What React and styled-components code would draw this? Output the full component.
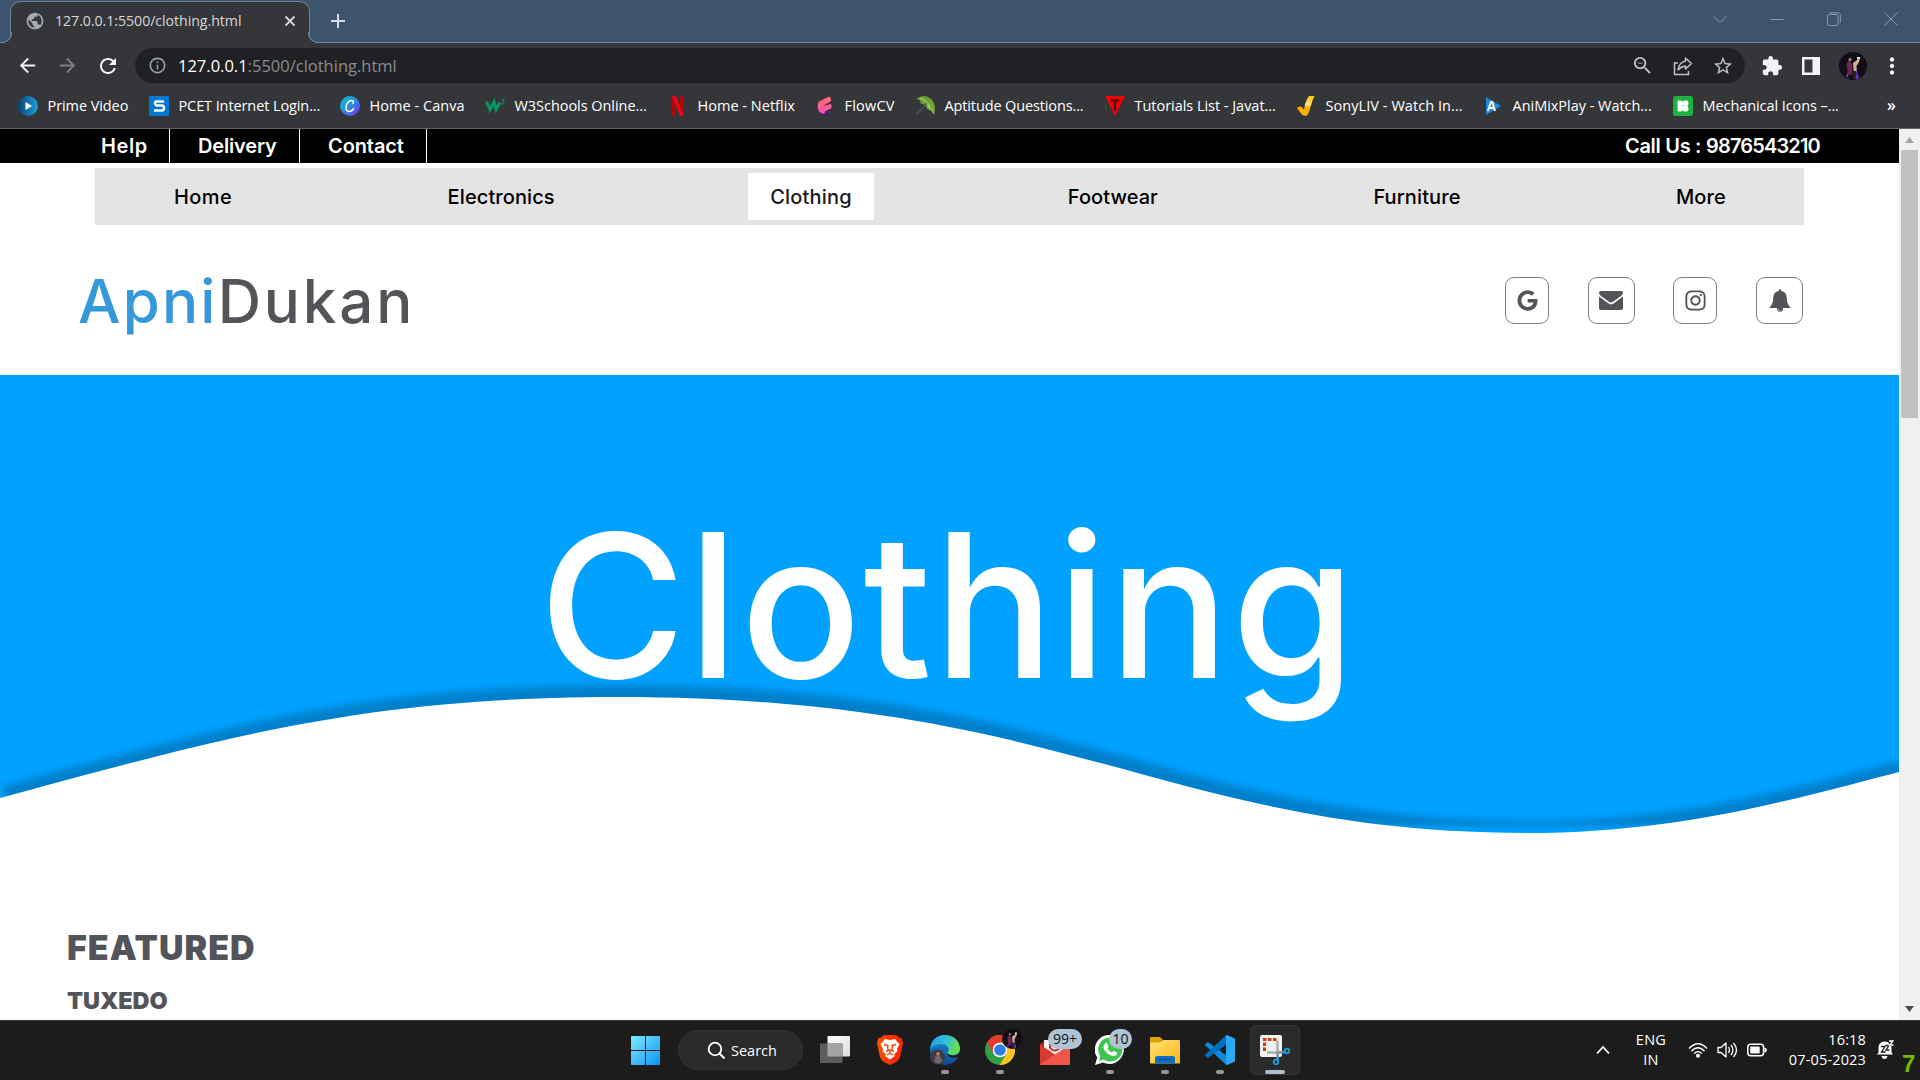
import React from 'react';
import styled, { createGlobalStyle } from 'styled-components';
import { FaGoogle, FaInstagram } from 'react-icons/fa';
import {
  MdArrowBack, MdArrowForward, MdRefresh, MdInfoOutline, MdZoomOut,
  MdStarBorder, MdExtension, MdMoreVert, MdPublic,
} from 'react-icons/md';

const GlobalStyle = createGlobalStyle`
  * { box-sizing: border-box; }
  body { margin: 0; background: #fff; overflow: hidden; }
  svg { display: block; flex: none; }
`;

const Screen = styled.div`
  width: 1920px;
  height: 1080px;
  display: flex;
  flex-direction: column;
  overflow: hidden;
  font-family: "Open Sans", "Noto Sans", sans-serif;
`;

/* ---------- browser window ---------- */

const TabStrip = styled.div`
  height: 43px;
  display: flex;
  align-items: stretch;
  background: #3c546c;
  border-bottom: 1px solid #6f869b;
`;

const Tab = styled.div`
  position: relative;
  width: 300px;
  height: 42px;
  margin: 1px 0 -1px 10px;
  padding: 0 13px 4px 14px;
  display: flex;
  align-items: center;
  gap: 10px;
  background: #35363a;
  border: 1px solid #6f869b;
  border-bottom: 0;
  border-radius: 10px 10px 0 0;
  color: #d5d7da;
  font-size: 14.2px;
  &::before, &::after {
    content: "";
    position: absolute;
    bottom: 0;
    width: 10px;
    height: 10px;
    border-bottom: 1px solid #6f869b;
    background: transparent;
  }
  &::before { left: -10px; border-right: 1px solid #6f869b; border-bottom-right-radius: 10px; box-shadow: 4px 4px 0 1px #35363a; clip-path: inset(0 -1px 0 0); }
  &::after { right: -10px; border-left: 1px solid #6f869b; border-bottom-left-radius: 10px; box-shadow: -4px 4px 0 1px #35363a; clip-path: inset(0 0 0 -1px); }
`;

const TabTitle = styled.span`
  flex: 1;
  letter-spacing: -0.06px;
  white-space: nowrap;
`;

const NewTab = styled.div`
  display: flex;
  align-items: center;
  padding: 0 0 0 20px;
`;

const WindowControls = styled.div`
  margin-left: auto;
  padding: 0 22px 5px 0;
  display: flex;
  align-items: center;
  gap: 43px;
`;

const Toolbar = styled.div`
  height: 45px;
  display: flex;
  align-items: center;
  padding: 0 15px 0 16px;
  background: #35363a;
  color: #f1f3f4;
`;

const NavButtons = styled.div`
  display: flex;
  gap: 17px;
  width: 119px;
`;

const Dim = styled.span`
  color: #8a8c90;
`;

const AddressBar = styled.div`
  width: 1610px;
  height: 35px;
  padding: 0 11px 0 13px;
  display: flex;
  align-items: center;
  border-radius: 18px;
  background: #202124;
  color: #bdc1c6;
`;

const Address = styled.span`
  flex: 1;
  padding-left: 11px;
  font-size: 16.5px;
  color: #fff;
  white-space: nowrap;
`;

const AddressActions = styled.div`
  display: flex;
  align-items: center;
  gap: 19px;
`;

const Extensions = styled.div`
  margin-left: auto;
  display: flex;
  align-items: center;
  gap: 18px;
`;

const MoreButton = styled.span`
  margin-left: -6px;
`;

const Bookmarks = styled.div`
  height: 41px;
  padding: 0 19px 5px 18px;
  display: flex;
  align-items: center;
  gap: 21px;
  background: #35363a;
  border-bottom: 1px solid #606165;
  color: #fff;
  font-size: 14.5px;
`;

const Bookmark = styled.div`
  display: flex;
  align-items: center;
  gap: 10px;
`;

const BookmarkLabel = styled.span`
  width: ${p => p.$w}px;
  margin-left: -0.5px;
  margin-right: 0.5px;
  letter-spacing: ${p => p.$ls || 0}px;
  white-space: nowrap;
`;

const Overflow = styled.span`
  margin-left: auto;
  padding: 0 5px 2px 0;
  font-size: 16px;
  font-weight: 600;
`;

/* ---------- shop page ---------- */

const Viewport = styled.div`
  height: 891px;
  display: flex;
  background: #fff;
`;

const Page = styled.main`
  width: 1899px;
  overflow: hidden;
  font-family: Inter, "Noto Sans", sans-serif;
  color: #53545a;
`;

const TopBar = styled.div`
  height: 34px;
  display: flex;
  padding: 0 79px 0 71px;
  background: #000;
  color: #fff;
  font-size: 20px;
  font-weight: 600;
  line-height: 34px;
`;

const TopLink = styled.span`
  width: ${p => p.$w}px;
  padding-left: ${p => p.$pad}px;
  border-right: 1px solid #fff;
  letter-spacing: ${p => p.$ls}px;
  white-space: nowrap;
`;

const Phone = styled.span`
  margin-left: auto;
  display: flex;
  width: 195px;
  white-space: nowrap;
`;

const PhoneLabel = styled.span`
  width: 81px;
  letter-spacing: -0.3px;
`;

const PhoneNumber = styled.span`
  letter-spacing: -0.84px;
`;

const Menu = styled.nav`
  height: 57px;
  margin: 5px 95px 0;
  padding: 0 57px;
  display: flex;
  align-items: center;
  justify-content: space-between;
  background: #e4e4e4;
`;

const MenuItem = styled.span`
  width: ${p => p.$w}px;
  height: 47px;
  padding-left: ${p => p.$pad || 21}px;
  background: ${p => (p.$active ? '#fff' : 'transparent')};
  color: ${p => (p.$active ? '#1a1a1a' : '#000')};
  font-size: 20px;
  font-weight: 500;
  line-height: 49px;
  letter-spacing: ${p => p.$ls}px;
  white-space: nowrap;
`;

const Header = styled.header`
  height: 150px;
  padding: 0 96px 0 78px;
  display: flex;
  align-items: center;
  justify-content: space-between;
`;

const Brand = styled.div`
  padding-top: 1px;
  font-size: 60px;
  font-weight: 500;
  letter-spacing: 2.9px;
  white-space: nowrap;
`;

const BrandAccent = styled.span`
  letter-spacing: 2.2px;
  color: #3498db;
`;

const Social = styled.div`
  display: flex;
  gap: 38.6px;
`;

const SocialButton = styled.span`
  width: ${p => p.$w}px;
  height: 47px;
  display: flex;
  align-items: center;
  justify-content: center;
  border: 1px solid #7f8084;
  border-radius: 9px;
`;

const Hero = styled.section`
  position: relative;
  height: 463px;
  padding: 130px 0 0 539px;
  background: #00a1ff;
  overflow: hidden;
`;

const HeroTitle = styled.h1`
  position: relative;
  margin: 0;
  color: #fff;
  font-size: 200px;
  font-weight: 500;
  line-height: 200px;
  letter-spacing: 2.2px;
`;

const Wave = styled.svg`
  position: absolute;
  left: 0;
  top: 0;
  filter: drop-shadow(4px -12px 3px rgba(0, 0, 0, 0.2));
`;

const Featured = styled.section`
  padding: 89px 0 0 67px;
`;

const FeaturedTitle = styled.h2`
  margin: 0;
  font-size: 34px;
  font-weight: 900;
  line-height: 42px;
  letter-spacing: 1px;
`;

const FeaturedItem = styled.h3`
  margin: 18px 0 0 0;
  font-size: 23.5px;
  font-weight: 900;
  line-height: 28px;
  letter-spacing: -0.1px;
`;

const Scrollbar = styled.div`
  width: 21px;
  padding: 8px 0;
  display: flex;
  flex-direction: column;
  align-items: center;
  background: #f0f0f0;
`;

const ScrollThumb = styled.div`
  width: 17px;
  height: 268px;
  margin: 7px 0 auto;
  background: #c1c1c1;
`;

/* ---------- taskbar ---------- */

const Taskbar = styled.footer`
  height: 60px;
  display: flex;
  align-items: stretch;
  padding-bottom: 1px;
  border-top: 1px solid #3b3d3f;
  background: #1c1c1c;
  color: #fff;
  font-size: 14.5px;
`;

const Apps = styled.div`
  padding-left: 620px;
  display: flex;
  align-items: center;
`;

const SearchPill = styled.div`
  width: 125px;
  height: 40px;
  margin: 0 4.5px 0 8px;
  padding-left: 28px;
  display: flex;
  align-items: center;
  gap: 5px;
  border: 1px solid #323232;
  border-radius: 20px;
  background: #2a2a2a;
`;

const TaskButton = styled.div`
  position: relative;
  width: ${p => (p.$active ? 50 : 55)}px;
  height: 50px;
  margin-left: ${p => (p.$active ? 2.5 : 0)}px;
  display: flex;
  align-items: center;
  justify-content: center;
  border-radius: 5px;
  background: ${p => (p.$active ? '#2a2a2a' : 'transparent')};
  border: 1px solid ${p => (p.$active ? '#353535' : 'transparent')};
  &::after {
    content: "";
    display: ${p => (p.$run ? 'block' : 'none')};
    position: absolute;
    bottom: 0;
    width: ${p => (p.$active ? 20 : 8)}px;
    height: 4px;
    border-radius: 2px;
    background: ${p => (p.$active ? '#aac1d4' : '#979797')};
  }
`;

const StartButton = styled(TaskButton)`
  width: 50px;
`;

const Badge = styled.span`
  position: absolute;
  top: 3px;
  left: ${p => p.$left}px;
  width: ${p => p.$w}px;
  height: 20px;
  border-radius: 10px;
  background: #aec4d5;
  color: #111;
  font-size: 14px;
  line-height: 20px;
  text-align: center;
`;

const BadgeAvatar = styled.span`
  position: absolute;
  top: 3px;
  left: 28px;
`;

const Tray = styled.div`
  margin-left: auto;
  display: flex;
  align-items: center;
`;

const Language = styled.div`
  width: 74px;
  margin-left: 4px;
  line-height: 20px;
  letter-spacing: 0.3px;
  text-align: center;
`;

const Clock = styled.div`
  width: 78px;
  margin-right: 10px;
  line-height: 20px;
  letter-spacing: 0.15px;
  text-align: right;
  white-space: nowrap;
`;

const TrayIcons = styled.div`
  display: flex;
  align-items: center;
  gap: 9px;
  margin-right: 21px;
`;

const TrayBell = styled.div`
  margin-right: 8px;
`;

const Fps = styled.span`
  width: 18px;
  padding-top: 28px;
  color: #76b900;
  font-family: "Liberation Sans", sans-serif;
  font-size: 24px;
  font-weight: 700;
  line-height: 24px;
`;

/* ---------- drawings ---------- */

const Avatar = ({ size }) => (
  <svg width={size} height={size} viewBox="0 0 28 28">
    <circle cx="14" cy="14" r="14" fill="#130d16" />
    <path d="M7.500 12l2.500-4 3 4 .5 5-1 6H9z" fill="#6b2a4d" />
    <path d="M14 11l4-3 1-3 2 1-1 4-2.500 4 .3 6h-3z" fill="#d3ae92" />
    <path d="M17.500 18l2.500 8-3 1.500zM8.500 20L7 24.500l2.500 2z" fill="#6a3ad0" />
    <path d="M13 19h4v8h-3z" fill="#2b2030" />
    <circle cx="11" cy="7.500" r="1.500" fill="#b98a76" />
    <path d="M18 5h3v1.800h-3z" fill="#f4ece4" />
  </svg>
);

const icons = {
  prime: (
    <>
      <defs><linearGradient id="pv" x1="1" x2="0"><stop offset="0" stopColor="#1d9fdc" /><stop offset="1" stopColor="#0b4270" /></linearGradient></defs>
      <circle cx="10" cy="10" r="10" fill="url(#pv)" /><path d="M7.500 6l6.500 4-6.500 4z" fill="#fff" />
    </>
  ),
  pcet: (
    <>
      <rect width="20" height="20" fill="#0078d0" />
      <path d="M15 5.500H7.500Q6 5.500 6 7T7.500 9.500H13q2 0 2 2.500t-2 2.500H5" fill="none" stroke="#fff" strokeWidth="2.400" />
    </>
  ),
  canva: (
    <>
      <defs><linearGradient id="cv" x1="0" y1="0" x2="1" y2="1"><stop offset="0" stopColor="#00c4cc" /><stop offset=".5" stopColor="#2f8be0" /><stop offset="1" stopColor="#7d2ae8" /></linearGradient></defs>
      <circle cx="10" cy="10" r="10" fill="url(#cv)" />
      <path d="M13 7.500c.8-1.200.5-3-1.300-3C8.500 4.500 6 8 6 11.500 6 14 7.300 15.500 9.200 15.500c1.800 0 3.300-1 4.300-2.800" fill="none" stroke="#fff" strokeWidth="1.500" strokeLinecap="round" />
    </>
  ),
  w3: (
    <>
      <path d="M1.500 5.500l3.500 8 4-7.500 2 7.500 4-7" fill="none" stroke="#059862" strokeWidth="3" />
      <path d="M16.500 3.500h2.500l-1.300 2q1.500.3 1.300 1.700-.3 1.300-2.500 1" fill="none" stroke="#059862" strokeWidth="1" />
    </>
  ),
  netflix: (
    <>
      <path d="M4 0h4v20l-4 .3zM12 0h4v20.300l-4-.3z" fill="#b1060f" />
      <path d="M4 0h4l8 20.200-4-.2z" fill="#e50914" />
    </>
  ),
  flow: (
    <>
      <defs><linearGradient id="fl" x1="0" y1="0" x2="0" y2="1"><stop offset="0" stopColor="#ff6b6b" /><stop offset="1" stopColor="#ff4fb4" /></linearGradient></defs>
      <path d="M7 14.500h7L10.500 20 7 18z" fill="#4a1a8c" />
      <path d="M3.500 6L14 .5q2.500 1.500 2 4.500l-6.500 4.500L16 8q1.500 2 0 4.500l-5.500 2.500-1.500 3-5-2L2.500 10z" fill="url(#fl)" />
      <path d="M9.500 9.500l3-2" stroke="#35363a" strokeWidth=".9" />
    </>
  ),
  umbrella: (
    <>
      <path d="M1 3Q10-3 16 3t3 15l-4-4-3-1-2-4-4-1.500L4.500 4z" fill="#6f9f35" />
      <path d="M5 2q8 1 14 16M5 2l7 4 3 8" stroke="#a5cf63" strokeWidth="1" fill="none" />
      <path d="M12 7L3.500 16.500Q2 19 .8 17" stroke="#55575a" strokeWidth="1.200" fill="none" />
    </>
  ),
  tutorial: (
    <>
      <path d="M0 0h20L10 20z" fill="#f90000" />
      <path d="M5.500 3.200h9v2.200h-3.200V15H8.700V5.400H5.500z" fill="#5c0909" />
      <path d="M.3 9v5" stroke="#5a5b5e" />
    </>
  ),
  sony: (
    <>
      <defs><linearGradient id="sl" x1="0" y1="0" x2="0" y2="1"><stop offset="0" stopColor="#ffc400" /><stop offset=".45" stopColor="#ffe680" /><stop offset=".55" stopColor="#f9ae00" /><stop offset="1" stopColor="#ffb300" /></linearGradient></defs>
      <path d="M1 12q2-2.500 5-1l2 3q1-9 5-14h5.500q-2.500 5-4 11-1 5-3.500 8.500-3 1-5-1Q3 15 1 12z" fill="url(#sl)" />
    </>
  ),
  ani: (
    <>
      <path d="M3 1l15 9L3 19z" fill="#1e88e5" />
      <path d="M4.800 15L8 6h1.300L12 15M6 12h5" fill="none" stroke="#fff" strokeWidth="1.900" />
    </>
  ),
  mech: (
    <>
      <rect width="20" height="20" rx="2.500" fill="#1fb141" />
      <path d="M4.500 5.500q0-1 1-1h2.500q1 0 1 1v1q.5-2 2.500-2h2q2 0 2 2.200 0 2.300-1.200 3.300 1.200 1 1.200 3.300 0 2.200-2 2.200h-2q-2 0-2.500-2v1q0 1-1 1H5.500q-1 0-1-1z" fill="#fff" />
      <path d="M9.500 9.800h1.600" stroke="#1fb141" strokeWidth=".8" />
    </>
  ),
};

const bookmarks = [
  ['prime', 'Prime Video', 80, -0.08],
  ['pcet', 'PCET Internet Login...', 140, -0.1],
  ['canva', 'Home - Canva', 94, 0.05],
  ['w3', 'W3Schools Online...', 132, -0.05],
  ['netflix', 'Home - Netflix', 96, 0.02],
  ['flow', 'FlowCV', 49, 0.2],
  ['umbrella', 'Aptitude Questions...', 139, -0.13],
  ['tutorial', 'Tutorials List - Javat...', 140, -0.03],
  ['sony', 'SonyLIV - Watch In...', 136, 0.06],
  ['ani', 'AniMixPlay - Watch...', 139, -0.03],
  ['mech', 'Mechanical Icons –...', 136, -0.08],
];

const menu = [
  ['Home', 101, 0.42, 22],
  ['Electronics', 150, 0.1, 22],
  ['Clothing', 126, 0.2, 22],
  ['Footwear', 133, 0.06, 21],
  ['Furniture', 130, 0.12, 21],
  ['More', 92, 0.1, 21],
];

const Browser = () => (
  <>
    <TabStrip>
      <Tab>
        <MdPublic size={20} color="#a6abb0" />
        <TabTitle>127.0.0.1:5500/clothing.html</TabTitle>
        <svg width="12" height="12" viewBox="0 0 12 12"><path d="M1.500 1.500l9 9M10.500 1.500l-9 9" stroke="#d5d7da" strokeWidth="1.800" /></svg>
      </Tab>
      <NewTab>
        <svg width="16" height="16" viewBox="0 0 16 16"><path d="M8 1v14M1 8h14" stroke="#d6dde4" strokeWidth="2" /></svg>
      </NewTab>
      <WindowControls>
        <svg width="14" height="14" viewBox="0 0 14 14"><path d="M.5 4L7 10.500 13.500 4" fill="none" stroke="#8a9aaa" /></svg>
        <svg width="14" height="14" viewBox="0 0 14 14"><path d="M.5 7.500h13" stroke="#8a9aaa" /></svg>
        <svg width="14" height="14" viewBox="0 0 14 14" fill="none" stroke="#8a9aaa"><rect x=".5" y="2.500" width="10.500" height="11" rx="2" /><path d="M2.500.8H11q2.300 0 2.300 2.300V11" /></svg>
        <svg width="14" height="14" viewBox="0 0 14 14"><path d="M.5.500l13 13M13.500.500l-13 13" stroke="#8a9aaa" /></svg>
      </WindowControls>
    </TabStrip>
    <Toolbar>
      <NavButtons>
        <MdArrowBack size={23} />
        <MdArrowForward size={23} color="#7d7e82" />
        <MdRefresh size={24} />
      </NavButtons>
      <AddressBar>
        <MdInfoOutline size={19} color="#9aa0a6" />
        <Address>127.0.0.1<Dim>:5500/clothing.html</Dim></Address>
        <AddressActions>
          <MdZoomOut size={23} />
          <svg width="20" height="20" viewBox="0 0 20 20" fill="none" stroke="#bdc1c6" strokeWidth="1.500">
            <path d="M5 7H1.500v11.500h14V15" /><path d="M12.500 2L18.500 7.500l-6 5.500V10Q8 10.500 5 14q.8-7.500 7.500-9z" strokeLinejoin="round" />
          </svg>
          <MdStarBorder size={22} />
        </AddressActions>
      </AddressBar>
      <Extensions>
        <MdExtension size={22} />
        <svg width="20" height="20" viewBox="0 0 20 20"><path d="M1 1h18v18H1zM3.500 3.500v13h8v-13z" fill="#f1f3f4" fillRule="evenodd" /></svg>
        <Avatar size={28} />
        <MoreButton><MdMoreVert size={26} /></MoreButton>
      </Extensions>
    </Toolbar>
    <Bookmarks>
      {bookmarks.map(([icon, label, w, ls]) => (
        <Bookmark key={icon}>
          <svg width="20" height="20" viewBox="0 0 20 20">{icons[icon]}</svg>
          <BookmarkLabel $w={w} $ls={ls}>{label}</BookmarkLabel>
        </Bookmark>
      ))}
      <Overflow>»</Overflow>
    </Bookmarks>
  </>
);

const Shop = () => (
  <Page>
    <TopBar>
      <TopLink $w={99} $ls={0.6} $pad={30}>Help</TopLink>
      <TopLink $w={130} $ls={-0.17} $pad={28}>Delivery</TopLink>
      <TopLink $w={127} $ls={-0.1} $pad={28}>Contact</TopLink>
      <Phone><PhoneLabel>Call Us : </PhoneLabel><PhoneNumber>9876543210</PhoneNumber></Phone>
    </TopBar>
    <Menu>
      {menu.map(([label, w, ls, pad]) => (
        <MenuItem key={label} $w={w} $ls={ls} $pad={pad} $active={label === 'Clothing'}>{label}</MenuItem>
      ))}
    </Menu>
    <Header>
      <Brand><BrandAccent>Apni</BrandAccent>Dukan</Brand>
      <Social>
        <SocialButton $w={44}><FaGoogle size={21} /></SocialButton>
        <SocialButton $w={47}>
          <svg width="24" height="19" viewBox="0 0 24 19" fill="#53545a"><path d="M1.500 0h21Q24 0 24 1.500q0 2-2 3.500l-8 5.800q-2 1.500-4 0L2 5Q0 3.500 0 1.500 0 0 1.500 0z" /><path d="M0 5.500l9.500 7q2.500 1.700 5 0l9.500-7V17q0 2-2 2H2q-2 0-2-2z" /></svg>
        </SocialButton>
        <SocialButton $w={44}><FaInstagram size={23} /></SocialButton>
        <SocialButton $w={47}>
          <svg width="22" height="23" viewBox="0 0 22 23" fill="#53545a"><path d="M9.800 1.500a1.200 1.200 0 0 1 2.400 0v.6q5.300 1 5.500 6.400.2 7.500 4.300 10.500H0q4-3 4.300-10.500.2-5.400 5.500-6.400z" /><path d="M8 19h6v.7a3 3 0 0 1-6 0z" /><path d="M9.200 20q.3 1.600 1.900 1.700" fill="none" stroke="#fff" strokeWidth=".6" /></svg>
        </SocialButton>
      </Social>
    </Header>
    <Hero>
      <Wave width="1899" height="463" viewBox="0 0 1899 463">
        <path d="M0 423C220 363.600 360 322 618 322C1070 322 1170 458 1526 458C1675 458 1789 425.600 1899 397V463H0Z" fill="#fff" />
      </Wave>
      <HeroTitle>Clothing</HeroTitle>
    </Hero>
    <Featured>
      <FeaturedTitle>FEATURED</FeaturedTitle>
      <FeaturedItem>TUXEDO</FeaturedItem>
    </Featured>
  </Page>
);

const Desktop = () => (
  <Taskbar>
    <Apps>
      <StartButton>
        <svg width="29" height="29" viewBox="0 0 29 29">
          <defs><linearGradient id="win" x1="0" y1="0" x2="1" y2="1"><stop offset="0" stopColor="#7eeaff" /><stop offset="1" stopColor="#0c94f5" /></linearGradient></defs>
          <path d="M1 0h13v14H0V1q0-1 1-1zM15 0h13q1 0 1 1v13H15zM0 15h14v14H1q-1 0-1-1zM15 15h14v13q0 1-1 1H15z" fill="url(#win)" />
        </svg>
      </StartButton>
      <SearchPill>
        <svg width="19" height="19" viewBox="0 0 19 19"><circle cx="8" cy="8" r="6.300" fill="none" stroke="#fff" strokeWidth="1.800" /><path d="M12.500 12.500l5 5" stroke="#fff" strokeWidth="2" /></svg>
        Search
      </SearchPill>
      <TaskButton>
        <svg width="30" height="30" viewBox="0 0 30 30">
          <defs><linearGradient id="tv" x1="0" y1="0" x2="1" y2="1"><stop offset="0" stopColor="#fff" /><stop offset="1" stopColor="#dcdcdc" /></linearGradient></defs>
          <rect x="7.500" y="1" width="22.500" height="20.500" rx="1" fill="url(#tv)" />
          <path d="M1 8.500h21.500V27q0 1-1 1H1q-1 0-1-1V9.500q0-1 1-1z" fill="#5d5d5d" />
          <path d="M7.500 8.500h15v13h-15z" fill="#a4a4a4" />
        </svg>
      </TaskButton>
      <TaskButton>
        <svg width="26" height="30" viewBox="0 0 26 30">
          <defs><linearGradient id="br" x1="0" y1="0" x2="1" y2="0"><stop offset="0" stopColor="#ff5500" /><stop offset=".6" stopColor="#ff2a00" /></linearGradient></defs>
          <path d="M7 0h12l3 2.500 2.500.500L26 8l-3 14q-1 3-4 5l-6 3-6-3q-3-2-4-5L0 8l1.500-5L4 2.500z" fill="url(#br)" />
          <path d="M8 4l5 1 5-1 4.500 5.500-2.500 4 .5 2.500-3.500 3.500 1 1.500-5 3.500-5-3.500 1-1.500L5.500 16l.5-2.500-2.500-4z" fill="#fff" />
          <path d="M7 9.500l4 1-.5 2.500 1 2.500L9 16M19 9.500l-4 1 .5 2.500-1 2.500 2.500.500M10 20l3-1.500 3 1.500M13 14v4" fill="none" stroke="#ff3a00" strokeWidth="1.300" />
        </svg>
      </TaskButton>
      <TaskButton $run>
        <svg width="30" height="30" viewBox="0 0 30 30">
          <defs>
            <linearGradient id="ed" x1="0" y1="0" x2="1" y2=".3"><stop offset="0" stopColor="#1aa0e8" /><stop offset=".6" stopColor="#35c1d1" /><stop offset="1" stopColor="#66e04a" /></linearGradient>
            <linearGradient id="ee" x1="0" y1="0" x2="0" y2="1"><stop offset="0" stopColor="#1b8fe0" /><stop offset="1" stopColor="#0c4a92" /></linearGradient>
          </defs>
          <circle cx="15" cy="15" r="15" fill="url(#ee)" />
          <path d="M0 14Q2 0 15.500 0 28 1 30 13q0 6-6.500 7-4 0-6-1.500-.5-1 1-3Q19 9 11 9 3 9.500 0 14z" fill="url(#ed)" />
          <path d="M17 18.500q4 3 9 1.500 3-1 4-3.500v3l-1 2.500q-6 1.500-10-.5-1.500-1-2-3z" fill="#1c1c1c" />
          <circle cx="7.500" cy="22" r="7.500" fill="#3d3b40" /><path d="M4 27l1.500-6 3-3 2 4 2 4-4 3z" fill="#77656a" /><circle cx="8" cy="18.500" r="1.600" fill="#c18d82" />
        </svg>
      </TaskButton>
      <TaskButton $run>
        <svg width="30" height="30" viewBox="0 0 30 30">
          <circle cx="15" cy="15" r="15" fill="#2f9e44" />
          <path d="M15 15L2 7.500A15 15 0 0 1 28 7.500z" fill="#e33b2e" />
          <path d="M15 7.500h13A15 15 0 0 1 14.500 30l7-11z" fill="#fcc31e" />
          <path d="M2 7.500L8.500 19 15 8z" fill="#e33b2e" />
          <circle cx="15" cy="15" r="7.300" fill="#fff" /><circle cx="15" cy="15" r="5.800" fill="#2f7de8" />
        </svg>
        <BadgeAvatar><Avatar size={20} /></BadgeAvatar>
      </TaskButton>
      <TaskButton>
        <svg width="30" height="30" viewBox="0 0 30 30">
          <path d="M0 9L15 0l15 9v20q0 1-1 1H1q-1 0-1-1z" fill="#c5221f" />
          <path d="M4 5h22v12l-11 6-11-6z" fill="#f6f6f6" />
          <circle cx="15" cy="10.500" r="5" fill="none" stroke="#c5221f" strokeWidth="2.200" />
          <path d="M0 9.500l15 10V30H1q-1 0-1-1z" fill="#d93a30" /><path d="M30 9.500L0 29.500q.3.500 1 .5h28q1 0 1-1z" fill="#f0574a" />
        </svg>
        <Badge $left={19.5} $w={34}>99+</Badge>
      </TaskButton>
      <TaskButton $run>
        <svg width="30" height="30" viewBox="0 0 30 30">
          <path d="M15.500 0A14.500 14.500 0 1 1 8 27.500L0 30l2.300-7.500A14.500 14.500 0 0 1 15.500 0z" fill="#fff" />
          <path d="M15.500 2.500a12 12 0 1 1-6.800 22L4 26l1.300-4.800A12 12 0 0 1 15.500 2.500z" fill="#3fc351" />
          <path d="M10 8.500q1.500-1.500 2.500.5l1 2.500-1.200 1.800q1.500 3 4.700 4.200l1.700-1.700 3.300 1.700q.8.800-.5 2.500-2 2-5.500.500-6-2.500-7.500-7.500Q8.300 10.500 10 8.500z" fill="#fff" />
        </svg>
        <Badge $left={25.5} $w={23}>10</Badge>
      </TaskButton>
      <TaskButton $run>
        <svg width="30" height="30" viewBox="0 0 30 30">
          <defs><linearGradient id="fo" x1="0" y1="0" x2="1" y2="1"><stop offset="0" stopColor="#ffe07a" /><stop offset="1" stopColor="#fcb80f" /></linearGradient></defs>
          <path d="M1 2h9l3 3h-1l-2 3H0V3q0-1 1-1z" fill="#e0a000" />
          <path d="M0 7.500h9.500L13 5h16q1 0 1 1v22q0 .5-1 .5H1q-1 0-1-1z" fill="url(#fo)" />
          <path d="M5 28.500V23q0-2 2-2h16q2 0 2 2v5.500z" fill="#0f6fc9" /><path d="M8.500 24.500h13" stroke="#0a4688" strokeWidth="1.200" />
        </svg>
      </TaskButton>
      <TaskButton $run>
        <svg width="30" height="30" viewBox="0 0 30 30">
          <path d="M22 30v-9L3.500 7.500Q2.700 7 2 7.500L.4 9q-.8.800 0 1.600L20.500 29.300q.7.700 1.500.7z" fill="#0f8bdb" />
          <path d="M22 0v9L3.500 22.500q-.8.500-1.500 0L.4 21q-.8-.8 0-1.600L20.500.7q.7-.7 1.500-.7z" fill="#0070c0" />
          <path d="M22 0l7 3q1 .5 1 1.500v21q0 1-1 1.500l-7 3-1-1V1z" fill="#29a9f2" />
        </svg>
      </TaskButton>
      <TaskButton $run $active>
        <svg width="30" height="30" viewBox="0 0 30 30">
          <rect width="22" height="22" rx="2" fill="#f1f1f1" />
          <path d="M4.500 16V4.500H17" fill="none" stroke="#d83b01" strokeWidth="3" strokeDasharray="3.500 1.500" />
          <path d="M17.500 6v11.500H7" fill="none" stroke="#a9acb0" strokeWidth="2.500" />
          <path d="M17.500 17.500L25 17M17.500 17.500V25" stroke="#8d9196" strokeWidth="2.500" />
          <circle cx="27" cy="16" r="2.300" fill="none" stroke="#1ba1e2" strokeWidth="1.800" /><circle cx="16" cy="27" r="2.300" fill="none" stroke="#1ba1e2" strokeWidth="1.800" />
          <path d="M21 18l4-1M18 21l-1 4" stroke="#1ba1e2" strokeWidth="1.800" />
        </svg>
      </TaskButton>
    </Apps>
    <Tray>
      <svg width="14" height="10" viewBox="0 0 14 10"><path d="M1 8.500l6-6.500 6 6.500" fill="none" stroke="#fff" strokeWidth="1.800" /></svg>
      <Language>ENG<br />IN</Language>
      <TrayIcons>
        <svg width="20" height="16" viewBox="0 0 20 16" fill="none" stroke="#fff" strokeWidth="1.400">
          <path d="M1 6.500q9-9.500 18 0M3.500 9.200q6.500-7 13 0M6.200 11.600q3.800-4 7.600 0" /><circle cx="10" cy="13.700" r="1.300" fill="#fff" />
        </svg>
        <svg width="21" height="18" viewBox="0 0 21 18" fill="none" stroke="#fff" strokeWidth="1.300">
          <path d="M1 6.500h3L9 2v14l-5-4.500H1z" strokeLinejoin="round" /><path d="M11.500 6q2 3 0 6M14 4q3.800 5 0 10M16.500 2q6 7 0 14" />
        </svg>
        <svg width="20" height="14" viewBox="0 0 20 14"><rect x=".8" y="1.200" width="15.800" height="11.600" rx="3" fill="none" stroke="#fff" strokeWidth="1.500" /><rect x="3.200" y="3.500" width="9.500" height="7" rx="1" fill="#fff" /><path d="M17.500 4.500q2.500.5 2.500 2.500t-2.500 2.500z" fill="#fff" /></svg>
      </TrayIcons>
      <Clock>16:18<br />07-05-2023</Clock>
      <TrayBell>
        <svg width="18" height="20" viewBox="0 0 18 20">
          <path d="M1 14.500l1.500-2V8q0-6 6-6.500 7 .5 7 6.500v4.500l1.500 2zM5.500 16h6q-.5 3-3 3t-3-3z" fill="#fff" />
          <path d="M5 6.500h4L5.500 12h4M9.500 5.500H13L10 10h3.500" fill="none" stroke="#1c1c1c" strokeWidth="1.300" />
          <path d="M11.500 0H18v6h-4z" fill="#1c1c1c" /><path d="M13 1h4l-3.500 4h4" fill="none" stroke="#fff" strokeWidth="1.300" />
        </svg>
      </TrayBell>
      <Fps>7</Fps>
    </Tray>
  </Taskbar>
);

export default function App() {
  return (
    <Screen>
      <GlobalStyle />
      <Browser />
      <Viewport>
        <Shop />
        <Scrollbar>
          <svg width="9" height="6" viewBox="0 0 9 6"><path d="M0 6h9L4.500 0z" fill="#a3a3a3" /></svg>
          <ScrollThumb />
          <svg width="9" height="6" viewBox="0 0 9 6"><path d="M0 0h9L4.500 6z" fill="#4c4c4c" /></svg>
        </Scrollbar>
      </Viewport>
      <Desktop />
    </Screen>
  );
}
